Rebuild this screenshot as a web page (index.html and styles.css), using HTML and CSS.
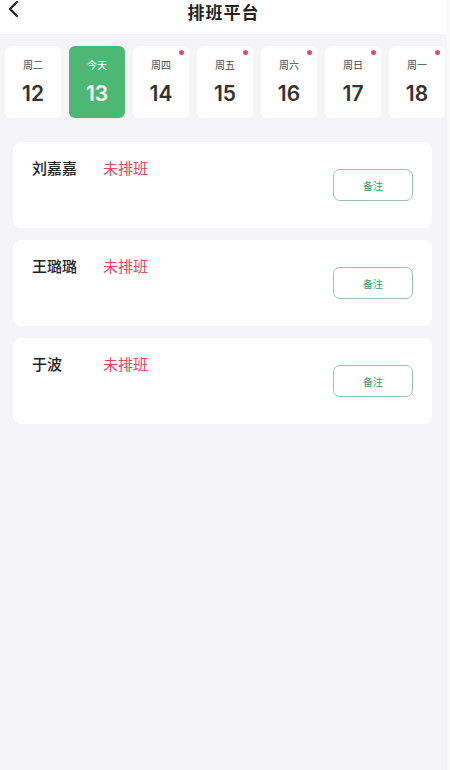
FILE: index.html
```html
<!DOCTYPE html>
<html lang="zh-CN">
<head>
  <meta charset="UTF-8" />
  <title>排班平台</title>
  <link rel="stylesheet" href="styles.css">
</head>
<body>
  <div class="page">

    <!-- Top bar -->
    <div class="topbar">
      <span class="back" aria-label="返回">
        <svg width="12" height="18" viewBox="0 0 12 18"><path d="M10 2 L3 9 L10 16" fill="none" stroke="#222" stroke-width="2.4" stroke-linecap="round" stroke-linejoin="round"/></svg>
      </span>
      <div class="title">排班平台</div>
    </div>

    <!-- Week strip -->
    <div class="week">
      <div class="day"><div class="wd">周二</div><div class="num">12</div></div>
      <div class="day today"><div class="wd">今天</div><div class="num">13</div></div>
      <div class="day dot"><div class="wd">周四</div><div class="num">14</div></div>
      <div class="day dot"><div class="wd">周五</div><div class="num">15</div></div>
      <div class="day dot"><div class="wd">周六</div><div class="num">16</div></div>
      <div class="day dot"><div class="wd">周日</div><div class="num">17</div></div>
      <div class="day dot"><div class="wd">周一</div><div class="num">18</div></div>
    </div>

    <!-- Staff list -->
    <div class="list">
      <div class="row">
        <div class="info"><span class="name">刘嘉嘉</span><span class="status">未排班</span></div>
        <button class="note">备注</button>
      </div>
      <div class="row">
        <div class="info"><span class="name">王璐璐</span><span class="status">未排班</span></div>
        <button class="note">备注</button>
      </div>
      <div class="row">
        <div class="info"><span class="name">于波</span><span class="status">未排班</span></div>
        <button class="note">备注</button>
      </div>
    </div>

  </div>
</body>
</html>
```

FILE: styles.css
```css
* {
  margin: 0; padding: 0; box-sizing: border-box;
}
html, body {
  height: 100%;
  background: #f5f5f7;
  font-family: "Noto Sans CJK SC", "Noto Sans", sans-serif;
  color: #222;
}
.page {
  min-height: 100%;
  border-right: 3px solid #fafafa;
}

/* Top bar */
.topbar {
  position: relative;
  height: 34px;
  background: #fff;
  display: flex;
  align-items: center;
  justify-content: center;
}
.back {
  position: absolute;
  left: 7px;
  top: 0;
  display: flex;
}
.title {
  font-size: 17px;
  font-weight: 700;
  margin-top: -12px;
  letter-spacing: 1px;
}

/* Week strip */
.week {
  display: flex;
  gap: 8px;
  padding: 12px 0 0 5px;
}
.day {
  position: relative;
  width: 56px;
  height: 72px;
  background: #fff;
  border-radius: 6px;
  display: flex;
  flex-direction: column;
  align-items: center;
  padding-top: 12px;
}
.day .wd {
  font-size: 10px;
  color: #444;
  line-height: 14px;
}
.day .num {
  font-family: Inter, "Noto Sans", sans-serif;
  font-size: 21px;
  font-weight: 600;
  color: #333;
  line-height: 24px;
  margin-top: 10px;
}
.day.today {
  background: #4cb874;
}
.day.today .wd,
.day.today .num {
  color: #fff;
}
.day.dot::after {
  content: "";
  position: absolute;
  top: 4px;
  right: 5px;
  width: 5px;
  height: 5px;
  border-radius: 50%;
  background: #e8486c;
}

/* List */
.list {
  display: flex;
  flex-direction: column;
  gap: 12px;
  padding: 24px 15px 0 13px;
}
.row {
  height: 86px;
  background: #fff;
  border-radius: 8px;
  display: flex;
  justify-content: space-between;
  align-items: center;
  padding: 0 19px 0 19px;
}
.info {
  align-self: flex-start;
  padding-top: 15px;
  display: flex;
  font-size: 15px;
  line-height: 22px;
}
.name {
  width: 71px;
  color: #222;
  font-weight: 500;
}
.status {
  color: #e0465e;
}
.note {
  width: 80px;
  height: 32px;
  background: #fff;
  border: 1.5px solid #98c2ad;
  border-radius: 7px;
  font-family: inherit;
  font-size: 10px;
  color: #3e9a6a;
}
```
